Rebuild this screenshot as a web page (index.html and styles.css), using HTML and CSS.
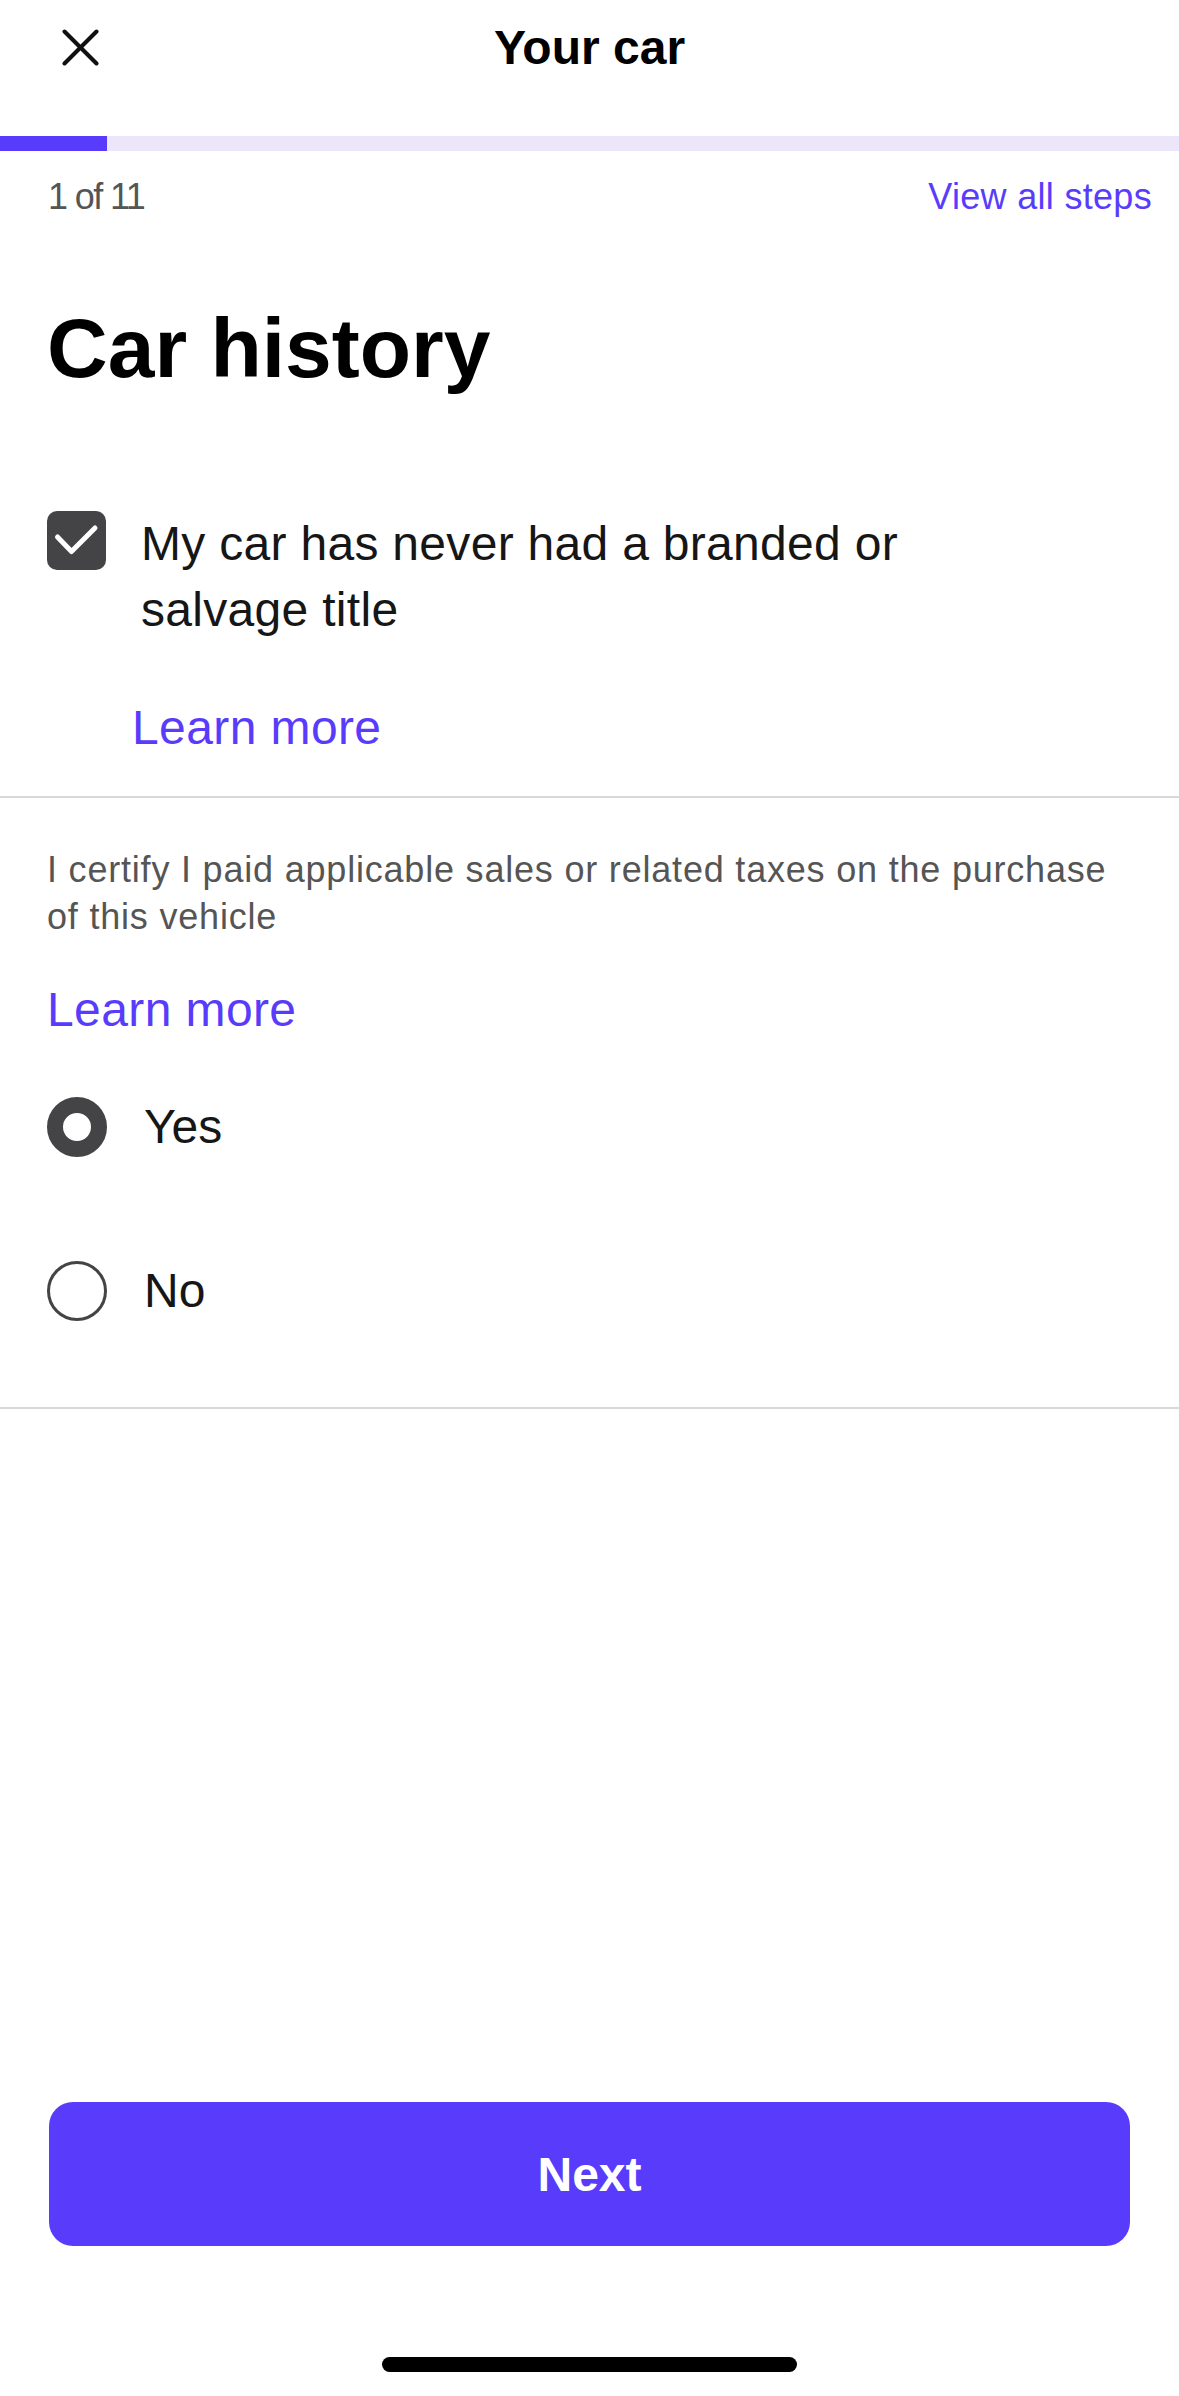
FILE: index.html
```html
<!DOCTYPE html>
<html lang="en">
<head>
  <meta charset="UTF-8" />
  <meta name="viewport" content="width=device-width, initial-scale=1" />
  <title>Your car</title>
  <link rel="stylesheet" href="styles.css">
</head>
<body>
  <div class="screen">
    <header class="topbar">
      <button class="close-btn" type="button" aria-label="Close">
        <svg width="37" height="37" viewBox="0 0 37 37">
          <line x1="2.5" y1="2.5" x2="34.5" y2="34.5" />
          <line x1="34.5" y1="2.5" x2="2.5" y2="34.5" />
        </svg>
      </button>
      <h1 class="topbar-title">Your car</h1>
      <span></span>
    </header>

    <div class="progress"><div class="progress-fill" style="width: 9.09%"></div></div>

    <div class="steps">
      <span class="step-count">1 of 11</span>
      <a class="view-steps" href="#">View all steps</a>
    </div>

    <section class="history">
      <h2 class="page-title">Car history</h2>
      <label class="check-row">
        <span class="checkbox">
          <svg width="59" height="59" viewBox="0 0 59 59">
            <path d="M10.5 26 L24.5 40.5 L48 17" />
          </svg>
        </span>
        <span class="check-text">My car has never had a branded or salvage title</span>
      </label>
      <a class="learn-more indent" href="#">Learn more</a>
    </section>

    <hr class="divider">

    <section class="tax">
      <p class="tax-text">I certify I paid applicable sales or related taxes on the purchase of this vehicle</p>
      <a class="learn-more" href="#">Learn more</a>
      <div class="radio-group">
        <label class="radio-row"><span class="radio selected"></span>Yes</label>
        <label class="radio-row"><span class="radio"></span>No</label>
      </div>
    </section>

    <hr class="divider tax-end">

    <footer class="footer">
      <button class="next-btn" type="button">Next</button>
      <div class="home-indicator"></div>
    </footer>
  </div>
</body>
</html>
```

FILE: styles.css
```css
body {
  margin: 0;
  font-family: "Liberation Sans", Arial, sans-serif;
  background-color: #fff;
  color: #161616;
}
.screen {
  min-height: 100vh;
  display: flex;
  flex-direction: column;
}

/* top bar */
.topbar {
  height: 94px;
  display: grid;
  grid-template-columns: 1fr auto 1fr;
  align-items: center;
}
.close-btn {
  background: none;
  border: none;
  padding: 0;
  margin-left: 62px;
  width: 37px;
  height: 37px;
  cursor: pointer;
}
.close-btn svg line {
  stroke: #111;
  stroke-width: 4;
  stroke-linecap: round;
}
.topbar-title {
  margin: 0;
  font-size: 48px;
  font-weight: bold;
  color: #000;
}

.progress {
  margin-top: 42px;
  height: 15px;
  background-color: #ede6fa;
}
.progress-fill {
  height: 100%;
  background-color: #593cfb;
}

.steps {
  display: flex;
  justify-content: space-between;
  padding: 22px 27px 0 48px;
  line-height: 48px;
  font-size: 36px;
}
.step-count {
  color: #555;
  letter-spacing: -1.6px;
}
.view-steps {
  color: #593cfb;
  text-decoration: none;
  letter-spacing: 0.3px;
}

/* car history */
.history {
  display: flex;
  flex-direction: column;
  align-items: flex-start;
  padding: 0 47px;
}
.page-title {
  margin: 77px 0 0;
  font-size: 84px;
  line-height: 100px;
  font-weight: bold;
  color: #000;
}
.check-row {
  display: flex;
  align-items: flex-start;
  gap: 35px;
  margin-top: 113px;
  cursor: pointer;
}
.checkbox {
  width: 59px;
  height: 59px;
  flex-shrink: 0;
  border-radius: 10px;
  background-color: #444446;
}
.checkbox svg path {
  fill: none;
  stroke: #fff;
  stroke-width: 5;
  stroke-linecap: round;
  stroke-linejoin: round;
}
.check-text {
  max-width: 800px;
  font-size: 48px;
  line-height: 66px;
  letter-spacing: 0.3px;
}
.learn-more {
  font-size: 48px;
  line-height: 58px;
  color: #593cfb;
  text-decoration: none;
  letter-spacing: 0.4px;
}
.history .learn-more {
  margin-top: 56px;
}
.learn-more.indent {
  margin-left: 85px;
}

.divider {
  margin: 39px 0 0;
  border: none;
  height: 2px;
  background-color: #d8d8d8;
}
.divider.tax-end {
  margin-top: 86px;
}

/* tax section */
.tax {
  display: flex;
  flex-direction: column;
  align-items: flex-start;
  padding: 48px 47px 0;
}
.tax-text {
  margin: 0;
  font-size: 36px;
  line-height: 47px;
  color: #555;
  letter-spacing: 0.8px;
}
.tax .learn-more {
  margin-top: 41px;
}
.radio-group {
  display: flex;
  flex-direction: column;
  gap: 104px;
  margin-top: 58px;
}
.radio-row {
  display: flex;
  align-items: center;
  gap: 37px;
  font-size: 48px;
  line-height: 60px;
  cursor: pointer;
}
.radio {
  width: 60px;
  height: 60px;
  box-sizing: border-box;
  border-radius: 50%;
  border: 3px solid #444446;
}
.radio.selected {
  border-width: 16px;
}

/* footer */
.footer {
  margin-top: auto;
  padding: 0 49px 24px;
  display: flex;
  flex-direction: column;
  align-items: center;
}
.next-btn {
  width: 100%;
  height: 144px;
  border: none;
  border-radius: 24px;
  background-color: #593cfb;
  color: #fff;
  font-family: inherit;
  font-size: 48px;
  font-weight: bold;
  cursor: pointer;
}
.home-indicator {
  margin-top: 111px;
  width: 415px;
  height: 15px;
  border-radius: 8px;
  background-color: #000;
}
```
